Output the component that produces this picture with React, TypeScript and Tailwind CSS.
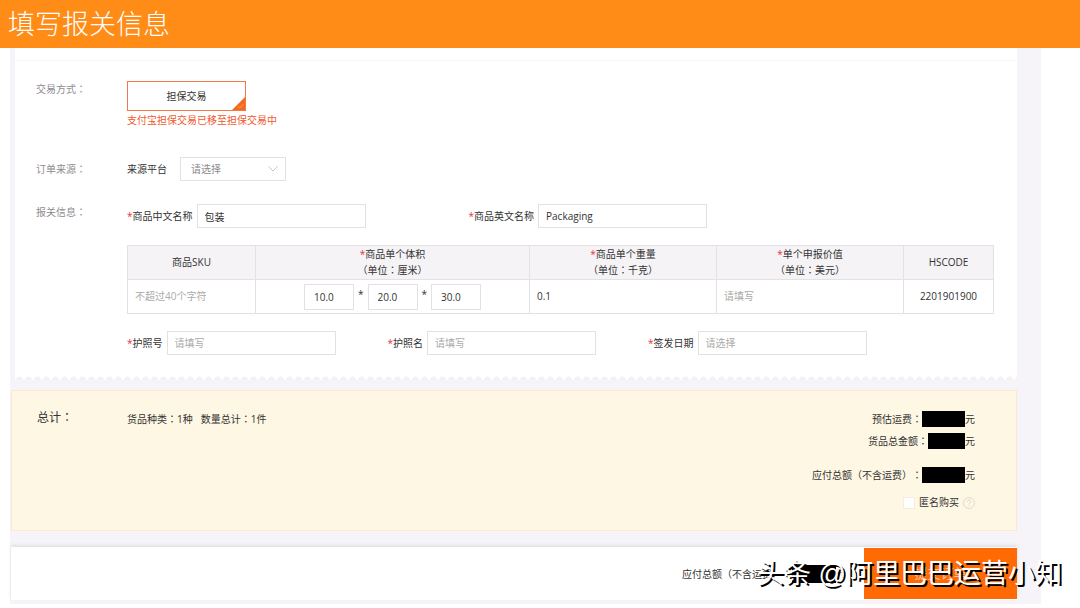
import type { ReactNode } from 'react';

const fieldClass =
  'h-6 w-[169px] border border-[#e3e1e5] bg-white px-[7px] text-[#333] placeholder:text-[#aaa] outline-none';

const sizeClass = 'h-[26px] w-[50px] border border-[#e3e1e5] px-[9px] outline-none';

function Star() {
  return <span className="text-[#e8303c]">*</span>;
}

// Centred full-width colon
function Colon() {
  return <span className="font-['Noto_Sans_CJK_TC',sans-serif]">：</span>;
}

function Row({ label, children }: { label: string; children: ReactNode }) {
  return (
    <div className="flex items-start">
      <div className="w-[91px] shrink-0 text-[#8f8c8f]">
        {label}
        <Colon />
      </div>
      <div className="min-w-0 flex-1">{children}</div>
    </div>
  );
}

type FieldProps = { id: string; label: string; value?: string; placeholder?: string };

function Field({ id, label, value, placeholder }: FieldProps) {
  return (
    <div className="flex items-center gap-1">
      <label htmlFor={id} className="whitespace-nowrap">
        <Star />
        {label}
      </label>
      <input id={id} type="text" defaultValue={value} placeholder={placeholder} className={fieldClass} />
    </div>
  );
}

function Unit({ name }: { name: string }) {
  return (
    <>
      （单位
      <Colon />
      {name}）
    </>
  );
}

function Amount({ label, short }: { label: string; short?: boolean }) {
  return (
    <div className="flex items-center">
      <span>
        {label}
        <Colon />
      </span>
      <span className={short ? 'h-4 w-[37px] bg-black' : 'h-4 w-[43px] bg-black'} />
      <span>元</span>
    </div>
  );
}

function CustomsTable() {
  return (
    <table className="w-full table-fixed border-collapse text-center">
      <colgroup>
        <col className="w-[128px]" />
        <col className="w-[274px]" />
        <col className="w-[187px]" />
        <col className="w-[187px]" />
        <col className="w-[90px]" />
      </colgroup>
      <thead>
        <tr className="h-[34px] bg-[#f5f3f6] [&>th]:border [&>th]:border-[#e3e1e5] [&>th]:p-0 [&>th]:font-normal">
          <th>商品SKU</th>
          <th>
            <Star />商品单个体积
            <br />
            <Unit name="厘米" />
          </th>
          <th>
            <Star />商品单个重量
            <br />
            <Unit name="千克" />
          </th>
          <th>
            <Star />单个申报价值
            <br />
            <Unit name="美元" />
          </th>
          <th>HSCODE</th>
        </tr>
      </thead>
      <tbody>
        <tr className="h-[34px] [&>td]:border [&>td]:border-[#e3e1e5] [&>td]:p-0">
          <td>
            <input aria-label="商品SKU" placeholder="不超过40个字符" className="w-full px-[7px] outline-none placeholder:text-[#aaa]" />
          </td>
          <td>
            <div className="flex items-center justify-center gap-1">
              <input aria-label="长" defaultValue="10.0" className={sizeClass} />
              <span className="pb-1">*</span>
              <input aria-label="宽" defaultValue="20.0" className={sizeClass} />
              <span className="pb-1">*</span>
              <input aria-label="高" defaultValue="30.0" className={sizeClass} />
            </div>
          </td>
          <td>
            <input aria-label="商品单个重量" defaultValue="0.1" className="w-full px-[7px] outline-none" />
          </td>
          <td>
            <input aria-label="单个申报价值" placeholder="请填写" className="w-full px-[7px] outline-none placeholder:text-[#aaa]" />
          </td>
          <td>2201901900</td>
        </tr>
      </tbody>
    </table>
  );
}

export default function App() {
  return (
    <div className="relative min-h-screen overflow-hidden bg-white font-['Open_Sans','Noto_Sans_CJK_SC',sans-serif] text-[10px] leading-[15px] text-[#333] [text-spacing-trim:space-all]">
      <header className="flex h-12 items-center bg-[#ff8c16] px-2">
        <h1 className="text-[27px] leading-9 font-light text-white">填写报关信息</h1>
      </header>

      <main className="mr-[39px] ml-[10px] bg-[#f6f4f8] pr-6 pb-1">
        {/* Order form */}
        <section className="ml-[5px] bg-white">
          <div className="h-[13px] border-b border-[#faf7fb]" />
          <div className="pt-5 pr-6 pb-[21px] pl-[21px]">
            <Row label="交易方式">
              <button type="button" className="relative block h-[30px] w-[119px] border border-[#f0784a]">
                担保交易
                <svg viewBox="0 0 13 13" className="absolute right-0 bottom-0 h-[13px] w-[13px]">
                  <path d="M13 0V13H0Z" fill="#f26a1b" />
                  <path d="M6 9.5l2 1.5 3.5-4" fill="none" stroke="#ff9a5e" />
                </svg>
              </button>
              <p className="pt-[2px] text-[#f0582c]">支付宝担保交易已移至担保交易中</p>
            </Row>

            <div className="flex items-center pt-[29px]">
              <div className="w-[91px] shrink-0 text-[#8f8c8f]">
                订单来源
                <Colon />
              </div>
              <label htmlFor="platform" className="pr-[13px]">来源平台</label>
              <div className="relative">
                <select id="platform" className="h-6 w-[106px] appearance-none border border-[#e3e1e5] bg-white pl-[10px] text-[#8c8a8c] outline-none">
                  <option>请选择</option>
                </select>
                <svg viewBox="0 0 10 6" className="pointer-events-none absolute top-[9px] right-2 h-[6px] w-[10px]">
                  <path d="M0.5 0.5L5 5L9.5 0.5" fill="none" stroke="#c4c2c6" />
                </svg>
              </div>
            </div>

            <div className="pt-[23px]">
              <Row label="报关信息">
                <div className="flex gap-[103px]">
                  <Field id="name-cn" label="商品中文名称" value="包装" />
                  <Field id="name-en" label="商品英文名称" value="Packaging" />
                </div>
                <div className="pt-[17px]">
                  <CustomsTable />
                </div>
                <div className="flex gap-[52px] pt-[17px]">
                  <Field id="passport-no" label="护照号" placeholder="请填写" />
                  <Field id="passport-name" label="护照名" placeholder="请填写" />
                  <Field id="issue-date" label="签发日期" placeholder="请选择" />
                </div>
              </Row>
            </div>
          </div>
          {/* Perforated edge */}
          <div className="h-1 bg-[radial-gradient(circle_at_50%_100%,#f3f1f5_3px,transparent_4px)] bg-size-[9px_4px]" />
        </section>

        {/* Totals */}
        <section className="mt-[10px] ml-px flex min-h-[141px] border border-[#fce9cf] bg-[#fef7e3] pt-[18px] pr-[41px] pl-[25px]">
          <h2 className="w-[90px] shrink-0 text-xs">
            总计
            <Colon />
          </h2>
          <p className="flex-1 pt-[2px]">
            货品种类
            <Colon />
            1种
            <span className="pl-2">
              数量总计
              <Colon />
              1件
            </span>
          </p>
          <div className="flex flex-col items-end pt-[2px]">
            <Amount label="预估运费" />
            <div className="pt-[6px]">
              <Amount label="货品总金额" short />
            </div>
            <div className="pt-[18px]">
              <Amount label="应付总额（不含运费）" />
            </div>
            <div className="flex items-center gap-1 pt-3">
              <input id="anonymous" type="checkbox" className="h-3 w-3 appearance-none border border-[#f3eee2] bg-white" />
              <label htmlFor="anonymous">匿名购买</label>
              <svg viewBox="0 0 12 12" className="h-3 w-3" fill="none" stroke="#e0dacb">
                <circle cx="6" cy="6" r="5.5" />
                <path d="M4.3 4.8C4.3 2.6 7.7 2.6 7.7 4.7C7.7 6 6 6 6 7.4M6 8.4V9.3" />
              </svg>
            </div>
          </div>
        </section>

        {/* Submit bar */}
        <section className="mt-4 ml-px flex h-[53px] items-center justify-end bg-white shadow-[0_-2px_3px_#e2e0e4]">
          <span>
            应付总额（不含运费）
            <Colon />
          </span>
          <span className="h-[18px] w-11 bg-black" />
          <span className="pr-[18px] text-[#f0784a]">元</span>
          <button type="button" className="h-[51px] w-[153px] bg-[#ff6a05] text-[13px] text-[#ffc29a]">
            提交订单
          </button>
        </section>
      </main>

      {/* Watermark */}
      <div className="pointer-events-none absolute right-[18px] bottom-4 font-['Liberation_Sans','Noto_Sans_CJK_SC',sans-serif] text-[27px] leading-9 whitespace-nowrap text-white [text-shadow:2px_2px_0_#000]">
        头条 @阿里巴巴运营小知
      </div>
    </div>
  );
}
